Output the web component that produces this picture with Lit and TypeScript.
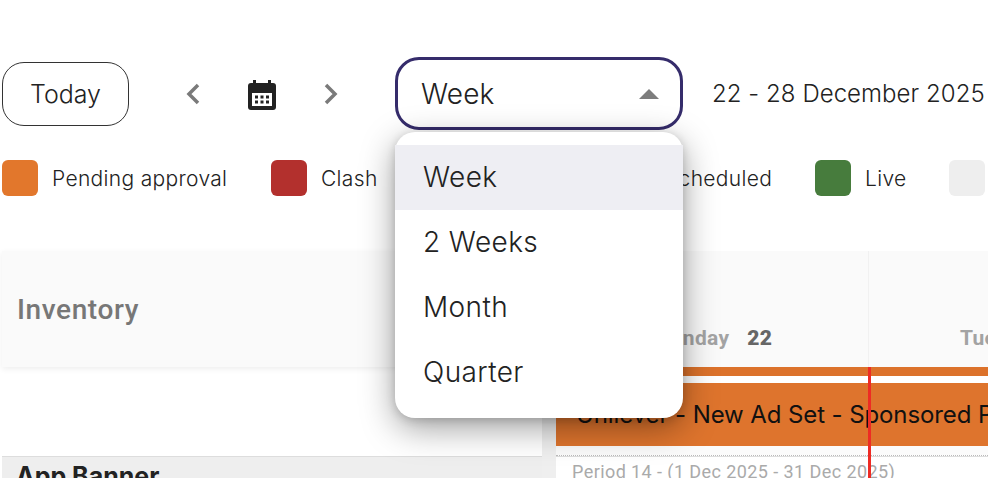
import { LitElement, html, css, svg } from "lit";
import { customElement } from "lit/decorators.js";

const chevron = (d: string) => html`<svg class="chev" width="24" height="24" viewBox="0 0 24 24"><path d=${d} fill="none" stroke="#7a7a7a" stroke-width="3.5"/></svg>`;

@customElement("app-root")
export class AppRoot extends LitElement {
  static styles = css`
    :host { display: block; width: 988px; height: 478px; overflow: hidden; position: relative; background: #fff; font-family: "Inter", sans-serif; color: #222; }
    .toolbar { display: flex; align-items: center; height: 73px; margin: 57px 0 0 2px; }
    .today { width: 127px; height: 64px; box-sizing: border-box; border: 1px solid #333; border-radius: 22px; display: flex; align-items: center; justify-content: center; font-size: 25px; font-weight: 300; }
    .nav { display: flex; align-items: center; justify-content: space-between; margin-left: 51px; width: 164px; }
    .chev { display: block; }
    .cal { display: block; margin: 3px 1px 0 0; }
    .select { margin-left: 51px; width: 288px; height: 73px; box-sizing: border-box; border: 3px solid #352c6b; border-radius: 24px; display: flex; align-items: center; justify-content: space-between; padding: 0 21px 0 23px; font-size: 28px; letter-spacing: .15px; font-weight: 300; }
    .tri { width: 0; height: 0; border-left: 10px solid transparent; border-right: 10px solid transparent; border-bottom: 10px solid #7d7d7d; }
    .date { margin-left: 29px; font-size: 24px; letter-spacing: .05px; font-weight: 300; white-space: nowrap; }
    .legend { display: flex; align-items: center; margin: 30px 0 0 2px; height: 36px; font-size: 21px; letter-spacing: .33px; font-weight: 300; white-space: nowrap; }
    .lg { display: flex; align-items: center; gap: 14px; flex: none; }
    .sw { width: 36px; height: 36px; border-radius: 6px; flex: none; }
    .table { display: flex; margin: 55px 0 0 2px; height: 227px; }
    .left { width: 540px; flex: none; display: flex; flex-direction: column; }
    .lh { height: 116px; box-sizing: border-box; background: #fafafa; box-shadow: 0 2px 6px rgba(0,0,0,.07); display: flex; align-items: center; padding: 0 15px; font: 500 28px "Roboto", sans-serif; letter-spacing: .6px; color: #777; }
    .spacer { height: 89px; }
    .group { flex: 1; background: #eee; border-top: 1px solid #ddd; padding: 4px 14px 0; font: 700 25px "Inter", sans-serif; color: #222; overflow: hidden; white-space: nowrap; }
    .gutter { width: 14px; flex: none; display: flex; flex-direction: column; }
    .gh { height: 116px; flex: none; background: #fafafa; }
    .gb { flex: 1; background: #efefef; }
    .right { flex: 1; min-width: 0; position: relative; display: flex; flex-direction: column; overflow: hidden; }
    .rh { height: 116px; flex: none; background: #fafafa; display: grid; grid-template-columns: 313px 313px 313px; }
    .day { border-right: 1px solid #f1f1f1; display: flex; align-items: flex-end; padding: 0 0 17px 0; font: 700 21px "Roboto", sans-serif; letter-spacing: .3px; color: #a3a3a3; white-space: nowrap; }
    .day b { color: #666; margin-left: 18px; }
    .d1 { padding-left: 96px; }
    .d2 { padding-left: 91px; }
    .strip { height: 9px; flex: none; background: #dc722b; }
    .bar { height: 63px; flex: none; margin-top: 7px; background: #de742d; display: flex; align-items: center; padding-left: 20px; font-size: 24px; letter-spacing: -.1px; font-weight: 400; color: #111; white-space: nowrap; overflow: hidden; }
    .rest { flex: 1; background: #fbfbfb; padding-top: 9px; }
    .period { background: #fff; height: 100%; box-sizing: border-box; border-top: 1px dotted #bbb; box-shadow: inset 0 1px 0 #ddd; padding: 5px 16px 0; font: 400 18px "Roboto", sans-serif; letter-spacing: .42px; color: #aaa; white-space: nowrap; }
    .now { position: absolute; left: 312px; top: 116px; bottom: 0; width: 3px; background: #ee2b24; }
    .menu { position: absolute; left: 395px; top: 132px; width: 288px; height: 286px; box-sizing: border-box; padding: 13px 0; background: #fff; border-radius: 20px; box-shadow: 0 10px 34px rgba(0,0,0,.38), 0 2px 10px rgba(0,0,0,.16); }
    .item { height: 65px; box-sizing: border-box; padding-bottom: 1px; display: flex; align-items: center; padding-left: 28px; font-size: 28px; letter-spacing: .4px; font-weight: 300; color: #222; }
    .item.sel { background: #eeeef3; }
  `;

  private calendar() {
    const dots = [];
    for (const y of [15.5, 20.5]) for (const x of [8, 13.5, 19]) dots.push(svg`<rect x=${x} y=${y} width="3" height="3" fill="#222"/>`);
    return html`<svg class="cal" width="30" height="30" viewBox="0 0 30 30"><rect x="1" y="3" width="28" height="27" rx="3" fill="#222"/><rect x="6" y="0" width="3" height="5" fill="#222"/><rect x="21" y="0" width="3" height="5" fill="#222"/><rect x="5" y="13" width="20" height="13" fill="#fff"/>${dots}</svg>`;
  }

  render() {
    return html`
      <div class="toolbar">
        <div class="today">Today</div>
        <div class="nav">
          ${chevron("M18 3l-9 9 9 9")}
          ${this.calendar()}
          ${chevron("M6 3l9 9-9 9")}
        </div>
        <div class="select"><span>Week</span><span class="tri"></span></div>
        <div class="date">22 - 28 December 2025</div>
      </div>
      <div class="legend">
        <div class="lg" style="width:269px"><span class="sw" style="background:#e2772c"></span>Pending approval</div>
        <div class="lg" style="width:344px"><span class="sw" style="background:#b3302d"></span>Clash</div>
        <div class="lg" style="width:200px"><span class="sw" style="background:#3a5fa8"></span>Scheduled</div>
        <div class="lg" style="width:134px"><span class="sw" style="background:#477c3d"></span>Live</div>
        <div class="lg"><span class="sw" style="background:#eeeeee"></span></div>
      </div>
      <div class="table">
        <div class="left">
          <div class="lh">Inventory</div>
          <div class="spacer"></div>
          <div class="group">App Banner</div>
        </div>
        <div class="gutter"><div class="gh"></div><div class="gb"></div></div>
        <div class="right">
          <div class="rh">
            <div class="day d1">Monday <b>22</b></div>
            <div class="day d2">Tuesday <b>23</b></div>
            <div class="day d2"></div>
          </div>
          <div class="strip"></div>
          <div class="bar">Unilever - New Ad Set - Sponsored Products</div>
          <div class="rest"><div class="period">Period 14 - (1 Dec 2025 - 31 Dec 2025)</div></div>
          <div class="now"></div>
        </div>
      </div>
      <div class="menu">
        <div class="item sel">Week</div>
        <div class="item">2 Weeks</div>
        <div class="item">Month</div>
        <div class="item">Quarter</div>
      </div>
    `;
  }
}
